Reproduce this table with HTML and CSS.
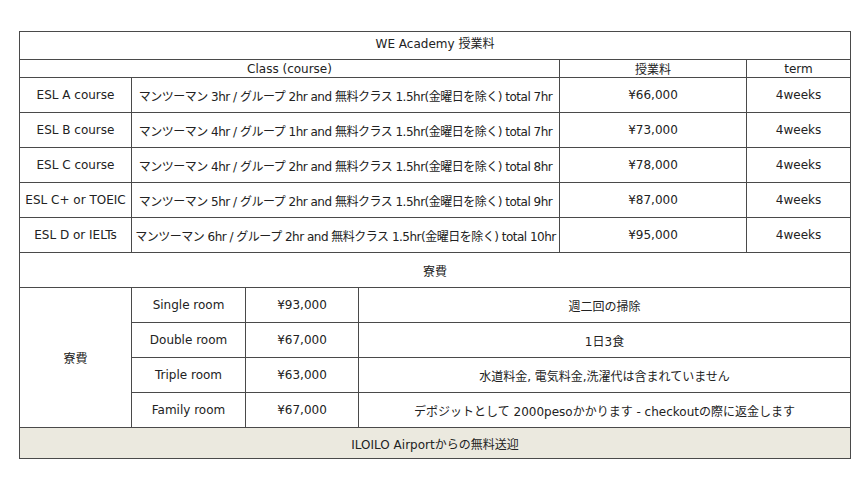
FILE: index.html
```html
<!DOCTYPE html>
<html lang="ja">
<head>
<meta charset="utf-8">
<title>WE Academy 授業料</title>
<link rel="stylesheet" href="styles.css">
</head>
<body>
<table class="fees">
  <colgroup>
    <col class="c1"><col class="c2"><col class="c3"><col class="c4"><col class="c5"><col class="c6">
  </colgroup>
  <tbody>
    <tr class="title-row"><td colspan="6">WE Academy 授業料</td></tr>
    <tr class="head-row"><td colspan="4">Class (course)</td><td>授業料</td><td>term</td></tr>
    <tr class="row"><td>ESL A course</td><td colspan="3" class="desc">マンツーマン 3hr / グループ 2hr and 無料クラス 1.5hr(金曜日を除く) total 7hr</td><td>¥66,000</td><td>4weeks</td></tr>
    <tr class="row"><td>ESL B course</td><td colspan="3" class="desc">マンツーマン 4hr / グループ 1hr and 無料クラス 1.5hr(金曜日を除く) total 7hr</td><td>¥73,000</td><td>4weeks</td></tr>
    <tr class="row"><td>ESL C course</td><td colspan="3" class="desc">マンツーマン 4hr / グループ 2hr and 無料クラス 1.5hr(金曜日を除く) total 8hr</td><td>¥78,000</td><td>4weeks</td></tr>
    <tr class="row"><td>ESL C+ or TOEIC</td><td colspan="3" class="desc">マンツーマン 5hr / グループ 2hr and 無料クラス 1.5hr(金曜日を除く) total 9hr</td><td>¥87,000</td><td>4weeks</td></tr>
    <tr class="row"><td>ESL D or IELTs</td><td colspan="3" class="desc">マンツーマン 6hr / グループ 2hr and 無料クラス 1.5hr(金曜日を除く) total 10hr</td><td>¥95,000</td><td>4weeks</td></tr>
    <tr class="row"><td colspan="6">寮費</td></tr>
    <tr class="row"><td rowspan="4">寮費</td><td>Single room</td><td>¥93,000</td><td colspan="3">週二回の掃除</td></tr>
    <tr class="row"><td>Double room</td><td>¥67,000</td><td colspan="3">1日3食</td></tr>
    <tr class="row"><td>Triple room</td><td>¥63,000</td><td colspan="3">水道料金, 電気料金,洗濯代は含まれていません</td></tr>
    <tr class="row"><td>Family room</td><td>¥67,000</td><td colspan="3">デポジットとして 2000pesoかかります - checkoutの際に返金します</td></tr>
    <tr class="foot-row"><td colspan="6">ILOILO Airportからの無料送迎</td></tr>
  </tbody>
</table>
</body>
</html>
```
FILE: styles.css
```css
html, body {
  margin: 0;
  padding: 0;
  background: #ffffff;
}
body {
  padding: 31px 0 0 19px;
  font-family: "DejaVu Sans", Verdana, "Noto Sans CJK JP", sans-serif;
  font-size: 12px;
  color: #222222;
}
.fees {
  border-collapse: collapse;
  table-layout: fixed;
  width: 831px;
  border: 1px solid #4a4a4a;
}
.c1 { width: 112px; }
.c2 { width: 114px; }
.c3 { width: 113px; }
.c4 { width: 201px; }
.c5 { width: 187px; }
.c6 { width: 104px; }
.fees td {
  border: 1px solid #4a4a4a;
  text-align: center;
  vertical-align: middle;
  padding: 0;
  white-space: nowrap;
  overflow: hidden;
}
.fees td.desc {
  letter-spacing: -0.5px;
}
.title-row td {
  height: 28px;
  padding-bottom: 6px;
  box-sizing: border-box;
}
.head-row td {
  height: 16px;
}
.row td {
  height: 34px;
}
.foot-row td {
  height: 30px;
  background: #ebe9df;
}
```
